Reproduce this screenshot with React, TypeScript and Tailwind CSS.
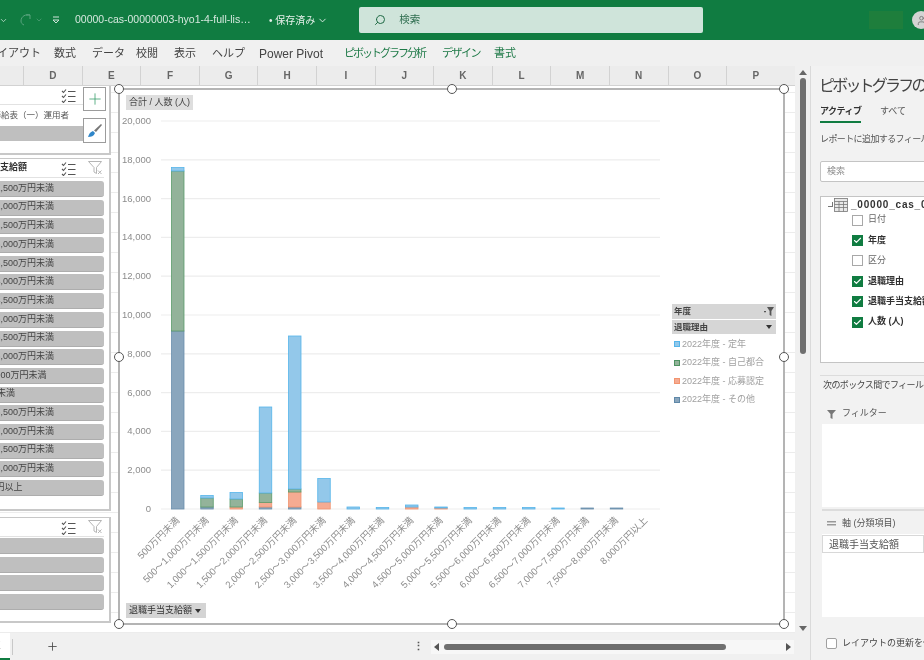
import { Check, ChevronDown, Plus, Search, User } from 'lucide-react';

const ribbonTabs = [
  { label: 'レイアウト', w: 'w-[54px]', cls: '-ml-[14px] w-[68px]' },
  { label: '数式', w: 'w-[38px]', cls: '' },
  { label: 'データ', w: 'w-[44px]', cls: '' },
  { label: '校閲', w: 'w-[38px]', cls: '' },
  { label: '表示', w: 'w-[38px]', cls: '' },
  { label: 'ヘルプ', w: 'w-[47px]', cls: '' },
  { label: 'Power Pivot', w: 'w-[85px]', cls: 'text-[12px]' },
  { label: 'ピボットグラフ分析', w: 'w-[98px]', cls: 'text-[#1f7a48] tracking-[-2px]' },
  { label: 'デザイン', w: 'w-[52px]', cls: 'text-[#1f7a48] tracking-[-1.5px]' },
  { label: '書式', w: 'w-[30px]', cls: 'text-[#1f7a48]' },
];

const columns = ['D', 'E', 'F', 'G', 'H', 'I', 'J', 'K', 'L', 'M', 'N', 'O', 'P'];

const amounts = [
  '1,000～1,500万円未満',
  '1,500～2,000万円未満',
  '2,000～2,500万円未満',
  '2,500～3,000万円未満',
  '3,000～3,500万円未満',
  '3,500～4,000万円未満',
  '4,000～4,500万円未満',
  '4,500～5,000万円未満',
  '5,000～5,500万円未満',
  '5,500～6,000万円未満',
  '500～1,000万円未満',
  '500万円未満',
  '6,000～6,500万円未満',
  '6,500～7,000万円未満',
  '7,000～7,500万円未満',
  '7,500～8,000万円未満',
  '8,000万円以上',
];

const axisLabels = [
  '500万円未満',
  '500～1,000万円未満',
  '1,000～1,500万円未満',
  '1,500～2,000万円未満',
  '2,000～2,500万円未満',
  '2,500～3,000万円未満',
  '3,000～3,500万円未満',
  '3,500～4,000万円未満',
  '4,000～4,500万円未満',
  '4,500～5,000万円未満',
  '5,000～5,500万円未満',
  '5,500～6,000万円未満',
  '6,000～6,500万円未満',
  '6,500～7,000万円未満',
  '7,000～7,500万円未満',
  '7,500～8,000万円未満',
  '8,000万円以上',
];

const colors = {
  blue: { fill: '#93c8ea', stroke: '#55b5ea' },
  green: { fill: '#93b39a', stroke: '#5b9c6b' },
  orange: { fill: '#f5ab92', stroke: '#f2946f' },
  dark: { fill: '#8aa6bd', stroke: '#6a90ad' },
};

type Seg = [keyof typeof colors, number, number];

const bars: Seg[][] = [
  [['dark', 331, 509], ['green', 171, 331], ['blue', 167.5, 171]],
  [['dark', 507, 509], ['green', 498, 507], ['blue', 495.5, 498]],
  [['orange', 507, 509], ['green', 499, 507], ['blue', 492.5, 499]],
  [['dark', 507, 509], ['orange', 502.5, 507], ['green', 493, 502.5], ['blue', 407, 493]],
  [['dark', 507, 509], ['orange', 492, 507], ['green', 489, 492], ['blue', 336, 489]],
  [['orange', 502, 509], ['blue', 478.5, 502]],
  [['blue', 507, 509]],
  [['blue', 507.5, 509]],
  [['orange', 507, 509], ['blue', 505, 507]],
  [['orange', 508, 509], ['blue', 507, 508]],
  [['blue', 507.5, 509]],
  [['blue', 507.5, 509]],
  [['blue', 507.5, 509]],
  [['blue', 508, 509]],
  [['dark', 508, 509]],
  [['dark', 508, 509]],
];

const ticks = [20000, 18000, 16000, 14000, 12000, 10000, 8000, 6000, 4000, 2000, 0];

const legend = [
  { label: '2022年度 - 定年', swatch: 'bg-[#93c8ea] border-[#55b5ea]' },
  { label: '2022年度 - 自己都合', swatch: 'bg-[#93b39a] border-[#4f9362]' },
  { label: '2022年度 - 応募認定', swatch: 'bg-[#f5ab92] border-[#f2946f]' },
  { label: '2022年度 - その他', swatch: 'bg-[#8aa6bd] border-[#5f88a8]' },
];

const fields = [
  { label: '日付', on: false },
  { label: '年度', on: true },
  { label: '区分', on: false },
  { label: '退職理由', on: true },
  { label: '退職手当支給額', on: true },
  { label: '人数 (人)', on: true },
];

const handles = [
  '-left-[6px] -top-[6px]',
  'left-[327px] -top-[6px]',
  '-right-[6px] -top-[6px]',
  '-left-[6px] top-[262px]',
  '-right-[6px] top-[262px]',
  '-left-[6px] -bottom-[6px]',
  'left-[327px] -bottom-[6px]',
  '-right-[6px] -bottom-[6px]',
];

function MultiSelectIcon() {
  return (
    <svg width="15" height="15" viewBox="0 0 15 15" fill="none" stroke="#555" strokeWidth="1.1">
      <path d="M1 3l1.5 1.5L5 1.5M1 8l1.5 1.5L5 6.5M1 13l1.5 1.5L5 11.5" />
      <path d="M7 3.5h7.5M7 8.5h7.5M7 13.5h7.5" />
    </svg>
  );
}

function ClearFilterIcon() {
  return (
    <svg width="15" height="14" viewBox="0 0 15 14" fill="none" stroke="#b5b5b5" strokeWidth="1">
      <path d="M0.5 0.5h13L8.5 6.5v6l-2.5-1.5V6.5z" />
      <path d="M10 9.5l3.5 3.5M13.5 9.5L10 13" />
    </svg>
  );
}

function SlicerHeader({ title, clear = true }: { title?: string; clear?: boolean }) {
  return (
    <div className="h-[19px] mr-[5px] flex items-center border-b border-[#e2e2e2]">
      <span className="flex-1 text-[9px] font-bold text-[#333] whitespace-nowrap">{title}</span>
      <div className="mr-[1px]">
        <MultiSelectIcon />
      </div>
      <div className={`ml-[11px] mr-[1px] ${clear ? '' : 'invisible'}`}>
        <ClearFilterIcon />
      </div>
    </div>
  );
}

function SlicerItem({ label }: { label: string }) {
  return (
    <div className="h-[16px] mr-[5px] bg-[#bfbfbf] rounded-r-[3px] border-b border-[#adadad] overflow-hidden flex items-center">
      <span className="-ml-[36px] text-[9px] text-[#444] whitespace-nowrap">{label}</span>
    </div>
  );
}

function Chart() {
  return (
    <div className="relative w-[667px] h-[537px] ml-[7px] mt-[2px] shrink-0 bg-white border-2 border-[#b4b4b4]">
      <svg className="absolute -left-[2px] -top-[2px]" width="667" height="537" viewBox="118 88 667 537">
        {ticks.map((t, i) => {
          const y = 121 + i * 38.8;
          return (
            <g key={t}>
              <line x1="161" x2="660" y1={y} y2={y} stroke="#ededed" strokeWidth="1.2" />
              <text x="151" y={y + 3} textAnchor="end" fontSize="9.5" fill="#8c8c8c">
                {t.toLocaleString('en-US')}
              </text>
            </g>
          );
        })}
        {bars.map((segs, i) =>
          segs.map(([c, top, bottom]) => (
            <rect
              key={`${i}-${c}`}
              x={171.5 + i * 29.25}
              y={top}
              width="12.5"
              height={bottom - top}
              fill={colors[c].fill}
              stroke={colors[c].stroke}
              strokeWidth="0.8"
            />
          )),
        )}
        {axisLabels.map((label, i) => {
          const x = 180 + i * 29.25;
          return (
            <text
              key={label}
              x={x}
              y={521}
              textAnchor="end"
              fontSize="9.6"
              fill="#8c8c8c"
              transform={`rotate(-45 ${x} 521)`}
            >
              {label}
            </text>
          );
        })}
      </svg>

      <div className="absolute left-[6px] top-[5px] h-[15px] px-[3px] flex items-center bg-[#dedede] text-[9px] text-[#444]">
        合計 / 人数 (人)
      </div>
      <div className="absolute left-[6px] top-[513px] w-[80px] h-[15px] px-[3px] flex items-center justify-between bg-[#d4d4d4] text-[9px] text-[#333]">
        退職手当支給額
        <span className="w-0 h-0 border-x-[3px] border-x-transparent border-t-[4px] border-t-[#333] mr-[2px]" />
      </div>

      <div className="absolute left-[552px] top-[214px] w-[104px]">
        <div className="h-[15px] px-[2px] flex items-center justify-between bg-[#d6d6d6] text-[8.5px] font-bold text-[#444]">
          年度
          <svg width="10" height="9" viewBox="0 0 10 9" fill="#555">
            <path d="M0 4h2v1.2H0zM3 0h7L7.4 4v5L5.6 8V4z" />
          </svg>
        </div>
        <div className="mt-[1px] h-[14px] px-[2px] flex items-center justify-between bg-[#d6d6d6] text-[8.5px] font-bold text-[#444]">
          退職理由
          <span className="w-0 h-0 border-x-[3px] border-x-transparent border-t-[4px] border-t-[#333] mr-[2px]" />
        </div>
        <div className="mt-[1px]">
          {legend.map((item) => (
            <div key={item.label} className="h-[18.6px] flex items-center text-[9px] text-[#a0a0a0] whitespace-nowrap">
              <span className={`w-[6px] h-[6px] mx-[2px] border ${item.swatch}`} />
              {item.label}
            </div>
          ))}
        </div>
      </div>

      {handles.map((h) => (
        <span key={h} className={`absolute ${h} w-[10px] h-[10px] rounded-full bg-white border-[1.5px] border-[#555]`} />
      ))}
    </div>
  );
}

function Slicers() {
  return (
    <div className="relative w-[111px] shrink-0 flex flex-col gap-[3px]">
      <div className="h-[69px] bg-white border-r-2 border-b-2 border-[#c8c8c8]">
        <SlicerHeader clear={false} />
        <div className="h-[21px] flex items-center overflow-hidden">
          <span className="-ml-[33px] text-[8.5px] text-[#555] whitespace-nowrap">給与職俸給表（一）運用者</span>
        </div>
        <div className="h-[15px] mr-[5px] bg-[#bfbfbf]" />
      </div>

      <div className="h-[353px] bg-white border-r-2 border-b-2 border-t border-[#c8c8c8]">
        <SlicerHeader title="支給額" />
        <div className="mt-[3px] flex flex-col gap-[2.69px]">
          {amounts.map((a) => (
            <SlicerItem key={a} label={a} />
          ))}
        </div>
      </div>

      <div className="mt-[3px] h-[106px] bg-white border-r-2 border-b-2 border-t border-[#c8c8c8]">
        <SlicerHeader />
        <div className="mt-[1px] flex flex-col gap-[2.69px]">
          {['定年', '自己都合', '応募認定', 'その他'].map((a) => (
            <SlicerItem key={a} label={a} />
          ))}
        </div>
      </div>

      {/* chart tool buttons */}
      <div className="absolute left-[83px] top-[1px] w-[23px] h-[24px] bg-white border border-[#9c9c9c] flex items-center justify-center">
        <Plus size={18} strokeWidth={1} color="#2e9a63" />
      </div>
      <div className="absolute left-[83px] top-[32px] w-[23px] h-[25px] bg-white border border-[#9c9c9c] flex items-center justify-center">
        <svg width="16" height="16" viewBox="0 0 16 16">
          <path d="M1 14c1-3 2-5 5-6l2 2c-1 3-4 4-7 4z" fill="#2f86c9" />
          <path d="M7 7.5L14 1l1 1-6 7z" fill="#777" />
        </svg>
      </div>
    </div>
  );
}

function SectionLabel({ icon, label }: { icon: React.ReactNode; label: string }) {
  return (
    <div className="h-[20px] pl-[16px] flex items-center text-[9px] text-[#555] whitespace-nowrap">
      <span className="w-[15px] flex justify-start">{icon}</span>
      {label}
    </div>
  );
}

function FieldPane() {
  return (
    <div className="w-[114px] shrink-0 h-full bg-[#f2f2f2] border-l border-[#dadada] overflow-hidden pl-[9px] whitespace-nowrap">
      <div className="mt-[9px] -ml-[1px] h-[22px] text-[16px] leading-[22px] tracking-[-2.8px] text-[#444]">ピボットグラフの</div>
      <div className="mt-[6px] flex text-[9px] h-[20px] leading-[16px]">
        <div className="w-[41px] h-[20px] font-bold text-[#333] border-b-2 border-[#107c41] tracking-[-0.5px]">アクティブ</div>
        <div className="ml-[19px] text-[#555]">すべて</div>
      </div>
      <div className="mt-[9px] h-[14px] text-[9px] leading-[14px] tracking-[-0.6px] text-[#555]">レポートに追加するフィール</div>
      <div className="mt-[15px] h-[21px] w-[120px] bg-white border border-[#c4c4c4] rounded-[2px] pl-[6px] flex items-center text-[9px] text-[#8c8c8c]">
        検索
      </div>
      <div className="mt-[14px] h-[167px] w-[120px] bg-white border border-[#c4c4c4]">
        <div className="h-[15px] pl-[7px] flex items-center">
          <span className="w-[5px] h-[5px] border-r border-b border-[#777]" />
          <svg className="ml-[1px] shrink-0" width="14" height="14" viewBox="0 0 14 14" fill="#e8e8e8" stroke="#777" strokeWidth="0.8">
            <rect x="0.5" y="0.5" width="13" height="13" />
            <path d="M0.5 3.5h13M0.5 6.5h13M0.5 9.5h13M5 3.5v10M9.5 3.5v10" fill="none" />
          </svg>
          <span className="ml-[3px] text-[10px] font-bold text-[#333] tracking-[0.8px]">_00000_cas_0</span>
        </div>
        <div className="-mt-[2px] pl-[31px]">
          {fields.map((f) => (
            <div key={f.label} className="h-[20.4px] flex items-center">
              {f.on ? (
                <span className="w-[11px] h-[11px] bg-[#107c41] flex items-center justify-center">
                  <Check size={9} strokeWidth={3} color="white" />
                </span>
              ) : (
                <span className="w-[11px] h-[11px] bg-white border border-[#a8a8a8]" />
              )}
              <span className={`ml-[5px] text-[9px] ${f.on ? 'font-bold text-[#333]' : 'text-[#666]'}`}>{f.label}</span>
            </div>
          ))}
        </div>
      </div>
      <div className="mt-[12px] h-[1px] bg-[#dcdcdc]" />
      <div className="mt-[2px] ml-[3px] h-[14px] text-[9px] leading-[14px] tracking-[-0.6px] text-[#444]">次のボックス間でフィールド</div>
      <div className="-ml-[9px] mt-[12px]">
        <SectionLabel
          icon={
            <svg width="9" height="9" viewBox="0 0 9 9" fill="#777">
              <path d="M0 0h9L5.5 4v5L3.5 8V4z" />
            </svg>
          }
          label="フィルター"
        />
      </div>
      <div className="ml-[2px] h-[83px] bg-white" />
      <div className="ml-[2px] mt-[2px] h-[2px] bg-[#dcdcdc]" />
      <div className="-ml-[9px] mt-[3px]">
        <SectionLabel
          icon={
            <svg width="9" height="7" viewBox="0 0 9 7" fill="#999">
              <path d="M0 0h9v1.5H0zM0 3h9v1.5H0z" />
            </svg>
          }
          label="軸 (分類項目)"
        />
      </div>
      <div className="ml-[2px] h-[83px] bg-white pt-[1px]">
        <div className="h-[18px] pl-[6px] flex items-center border border-[#d8d8d8] text-[10px] text-[#555]">退職手当支給額</div>
      </div>
      <div className="mt-[20px] flex items-center">
        <span className="ml-[6px] -mt-[1px] w-[11px] h-[11px] shrink-0 bg-white border border-[#a0a0a0] rounded-[2px]" />
        <span className="ml-[5px] text-[9px] text-[#444]">レイアウトの更新を保</span>
      </div>
    </div>
  );
}

export default function App() {
  return (
    <div className="w-[924px] h-[660px] flex flex-col overflow-hidden bg-[#f0f0f0] font-['Liberation_Sans','Noto_Sans_CJK_JP',sans-serif] blur-[0.4px]">
      {/* title bar */}
      <div className="h-[40px] shrink-0 bg-[#107c41] flex items-center text-white">
        <ChevronDown size={9} className="ml-[-1px] shrink-0 text-[#cfe4da]" />
        <svg className="ml-[10px] shrink-0" width="14" height="14" viewBox="0 0 14 14" fill="none" stroke="#5aa47f" strokeWidth="1">
          <path d="M8 2h4v4M12 2C8 1 3 3 3 8c0 2 1 3 3 4" />
        </svg>
        <ChevronDown size={8} className="ml-[3px] shrink-0 text-[#5aa47f]" />
        <svg className="ml-[9px] shrink-0" width="8" height="8" viewBox="0 0 8 8" fill="none" stroke="#cfe4da" strokeWidth="1">
          <path d="M1 1h6M1 4l3 3 3-3z" />
        </svg>
        <span className="ml-[15px] w-[190px] shrink-0 text-[10.5px] text-[#d5e8de] whitespace-nowrap">00000-cas-00000003-hyo1-4-full-lis…</span>
        <span className="ml-[4px] shrink-0 text-[10px] text-[#e5f0ea] whitespace-nowrap">• 保存済み</span>
        <ChevronDown size={11} className="ml-[2px] shrink-0 text-[#e5f0ea]" />
        <div className="ml-[31px] w-[344px] h-[26px] shrink-0 bg-[#cfe4da] rounded-[2px] flex items-center pl-[15px] text-[10.5px] text-[#2f6e50]">
          <Search size={12} className="-scale-x-100 text-[#1f6a45]" />
          <span className="ml-[13px]">検索</span>
        </div>
        <div className="ml-[166px] w-[34px] h-[18px] shrink-0 bg-[#1e7e3c]" />
        <div className="ml-[9px] w-[18px] h-[18px] rounded-full bg-[#d4d4d4] shrink-0 flex items-center justify-center">
          <User size={11} className="text-[#777]" />
        </div>
      </div>

      {/* ribbon tabs */}
      <div className="mt-[1px] h-[25px] shrink-0 flex items-center overflow-hidden text-[11px] text-[#444] whitespace-nowrap">
        {ribbonTabs.map((t) => (
          <div key={t.label} className={`shrink-0 ${t.w} ${t.cls}`}>
            {t.label}
          </div>
        ))}
      </div>

      <div className="flex-1 flex min-h-0">
        <div className="w-[810px] shrink-0 flex flex-col">
          <div className="flex-1 flex min-h-0">
            {/* sheet */}
            <div className="w-[795px] shrink-0 flex flex-col bg-white">
              <div className="h-[20px] shrink-0 flex bg-[#ececec] border-b border-[#d2d2d2] pl-[23px] text-[10px] font-bold text-[#666]">
                {columns.map((c) => (
                  <div key={c} className="w-[58.6px] shrink-0 border-l border-[#d2d2d2] flex items-center justify-center">
                    {c}
                  </div>
                ))}
              </div>
              <div className="flex-1 flex bg-white bg-[repeating-linear-gradient(0deg,#ececec_0,#ececec_1px,transparent_1px,transparent_20px)]">
                <Slicers />
                <Chart />
              </div>
            </div>
            {/* vertical scrollbar */}
            <div className="w-[15px] shrink-0 bg-[#f0f0f0] flex flex-col items-center pt-[4px] pb-[2px]">
              <span className="w-0 h-0 border-x-[4px] border-x-transparent border-b-[5px] border-b-[#666]" />
              <div className="mt-[3px] w-[6px] h-[276px] rounded-full bg-[#6f6f6f]" />
              <div className="flex-1" />
              <span className="w-0 h-0 border-x-[4px] border-x-transparent border-t-[5px] border-t-[#666]" />
            </div>
          </div>

          {/* sheet tabs and horizontal scrollbar */}
          <div className="h-[27px] shrink-0 flex items-center bg-[#f0f0f0]">
            <div className="w-[10px] h-full bg-white border-b-2 border-[#107c41] overflow-hidden flex items-center">
              <span className="-ml-[6px] text-[10px] text-[#555]">E</span>
            </div>
            <div className="ml-[2px] h-[16px] w-px bg-[#c8c8c8]" />
            <Plus size={13} strokeWidth={1.5} className="ml-[33px] text-[#444]" />
            <span className="ml-[354px] text-[11px] font-bold leading-none text-[#555]">⋮</span>
            <div className="ml-[7px] w-[363px] h-[14px] bg-[#f7f7f7] flex items-center px-[3px]">
              <span className="w-0 h-0 border-y-[4px] border-y-transparent border-r-[5px] border-r-[#555]" />
              <div className="ml-[5px] w-[282px] h-[6px] rounded-full bg-[#707070]" />
              <div className="flex-1" />
              <span className="w-0 h-0 border-y-[4px] border-y-transparent border-l-[5px] border-l-[#555]" />
            </div>
          </div>
        </div>

        <FieldPane />
      </div>
    </div>
  );
}
